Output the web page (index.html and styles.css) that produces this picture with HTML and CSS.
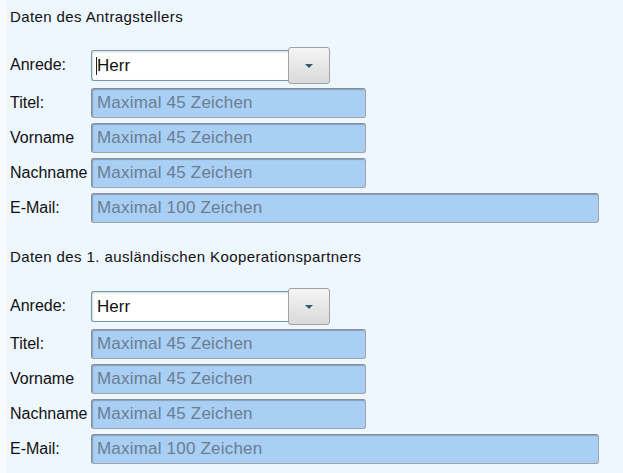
FILE: index.html
```html
<!DOCTYPE html>
<html lang="de">
<head>
<meta charset="utf-8">
<title>Daten</title>
<link rel="stylesheet" href="styles.css">
</head>
<body>
<div class="page">
  <section class="section">
    <h2 class="heading">Daten des Antragstellers</h2>
    <div class="form">
      <label class="label">Anrede:</label>
      <div class="select">
        <div class="select-value"><span class="caret"></span>Herr</div>
        <div class="select-btn"><span class="tri"></span></div>
      </div>
      <label class="label">Titel:</label>
      <input class="field short" placeholder="Maximal 45 Zeichen">
      <label class="label">Vorname</label>
      <input class="field short" placeholder="Maximal 45 Zeichen">
      <label class="label">Nachname</label>
      <input class="field short" placeholder="Maximal 45 Zeichen">
      <label class="label">E-Mail:</label>
      <input class="field long" placeholder="Maximal 100 Zeichen">
    </div>
  </section>
  <section class="section second">
    <h2 class="heading">Daten des 1. ausländischen Kooperationspartners</h2>
    <div class="form">
      <label class="label">Anrede:</label>
      <div class="select">
        <div class="select-value">Herr</div>
        <div class="select-btn"><span class="tri"></span></div>
      </div>
      <label class="label">Titel:</label>
      <input class="field short" placeholder="Maximal 45 Zeichen">
      <label class="label">Vorname</label>
      <input class="field short" placeholder="Maximal 45 Zeichen">
      <label class="label">Nachname</label>
      <input class="field short" placeholder="Maximal 45 Zeichen">
      <label class="label">E-Mail:</label>
      <input class="field long" placeholder="Maximal 100 Zeichen">
    </div>
  </section>
</div>
</body>
</html>
```

FILE: styles.css
```css
html, body {
  margin: 0;
  padding: 0;
  background: #f7fbff;
  font-family: "Liberation Sans", Arial, sans-serif;
  color: #111;
}
.page {
  margin-left: 7px;
  padding: 8px 0 0 3px;
  background: #eef6fe;
  min-height: 465px;
}
.heading {
  margin: 0;
  font-size: 15px;
  letter-spacing: 0.4px;
  font-weight: normal;
  line-height: 18px;
  height: 18px;
}
.section.second {
  margin-top: 25px;
}
.form {
  margin-top: 21px;
  display: grid;
  grid-template-columns: 81px auto;
  row-gap: 5px;
  align-items: center;
  justify-items: start;
}
.second .form {
  margin-top: 22px;
}
.label {
  font-size: 16px;
  line-height: 20px;
}
.select {
  display: flex;
  align-items: center;
  margin-bottom: -1px;
}
.select-value {
  box-sizing: border-box;
  width: 197px;
  height: 31px;
  background: #fff;
  border: 1px solid #7596ad;
  border-right: none;
  border-radius: 3px 0 0 3px;
  box-shadow: inset 1px 1px 2px rgba(0,0,0,0.15);
  font-size: 17px;
  line-height: 29px;
  padding-left: 5px;
  display: flex;
  align-items: center;
  color: #111;
}
.caret {
  display: inline-block;
  width: 1px;
  height: 18px;
  background: #222;
  margin-left: -1px;
}
.select-btn {
  box-sizing: border-box;
  width: 42px;
  height: 37px;
  border: 1px solid #a2a2a2;
  border-radius: 3px;
  background: linear-gradient(#f5f5f5, #d9d9d9);
  display: flex;
  align-items: center;
  justify-content: center;
}
.tri {
  width: 0;
  height: 0;
  border-left: 4px solid transparent;
  border-right: 4px solid transparent;
  border-top: 4px solid #2f5c78;
  margin-left: -1px;
}
.field {
  box-sizing: border-box;
  height: 30px;
  margin: 0;
  background: #a9cff4;
  border: 1px solid #a0a4a8;
  border-top-color: #8a8e92;
  border-left-color: #8a8e92;
  border-radius: 3px;
  box-shadow: inset 1px 1px 1px rgba(0,0,0,0.22);
  font-family: "Liberation Sans", Arial, sans-serif;
  font-size: 17px;
  letter-spacing: 0.2px;
  padding: 0 5px;
  color: #222;
}
.field::placeholder {
  color: #6a7e92;
  opacity: 1;
}
.short { width: 275px; }
.long { width: 508px; }
```
